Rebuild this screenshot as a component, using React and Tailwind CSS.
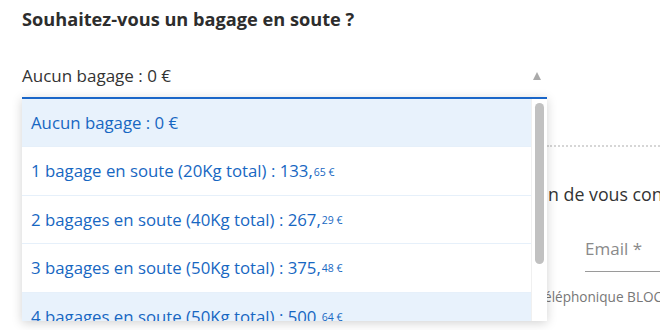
const options = [
  { label: 'Aucun bagage : 0 €', price: null, selected: true },
  { label: '1 bagage en soute (20Kg total) : 133,', price: '65 €' },
  { label: '2 bagages en soute (40Kg total) : 267,', price: '29 €' },
  { label: '3 bagages en soute (50Kg total) : 375,', price: '48 €' },
  { label: '4 bagages en soute (50Kg total) : 500,', price: '64 €', hover: true },
];

export default function App() {
  return (
    <div className="relative w-[660px] h-[330px] overflow-hidden bg-white font-['Open_Sans',sans-serif] text-[#333]">
      {/* Title */}
      <h1 className="pl-[22px] pt-[7px] text-[18.2px] font-bold leading-[24px] text-[#2d2d2d]">
        Souhaitez-vous un bagage en soute ?
      </h1>

      {/* Select */}
      <div className="mt-[30px] ml-[22px] w-[525px] flex items-center justify-between pr-[6px] h-[30px]">
        <span className="text-[17px]">Aucun bagage : 0 €</span>
        <span className="w-0 h-0 border-l-[4.5px] border-r-[4.5px] border-b-[8px] border-l-transparent border-r-transparent border-b-[#aaaaaa]" />
      </div>

      {/* Underlying form, right part (mostly covered by the open list) */}
      <div className="flex">
        <div className="w-[547px] shrink-0" />
        <div className="flex-1 overflow-hidden">
          <div className="mt-[54px] border-t-2 border-dotted border-[#d6d6d6]" />
          <div className="mt-[35px] text-[17.8px] leading-[24px] whitespace-nowrap ml-[1px]">n de vous contacter</div>
          <div className="mt-[31px] ml-[38px] text-[17px] leading-[24px] text-[#8a8a8a] whitespace-nowrap">Email *</div>
          <div className="mt-[10px] ml-[38px] border-t border-[#9a9a9a]" />
          <div className="mt-[16px] -ml-[3px] text-[13.6px] leading-[18px] text-[#777] whitespace-nowrap">éléphonique BLOC</div>
        </div>
      </div>

      {/* Dropdown overlay */}
      <div className="absolute left-[22px] top-[97px] w-[525px] h-[224px] bg-white border-t-2 border-[#1a66c8] shadow-[0_2px_10px_rgba(0,0,0,0.18)] flex overflow-hidden">
        <ul className="flex-1">
          {options.map((o, i) => (
            <li
              key={i}
              className={
                'h-[48.4px] flex items-center pl-[9px] border-b border-[#e6f0fa] text-[16.8px] text-[#1767c2] whitespace-nowrap ' +
                (o.selected || o.hover ? 'bg-[#e8f2fc]' : 'bg-white')
              }
            >
              <span>{o.label}</span>
              <span className="text-[10.5px] ml-[1px] mt-[3px]">{o.price}</span>
            </li>
          ))}
        </ul>
        <div className="w-[16px] bg-white border-l border-[#f0f0f0] pt-[4px] flex justify-center">
          <div className="w-[9px] h-[161px] rounded-full bg-[#c1c1c1]" />
        </div>
      </div>
    </div>
  );
}
